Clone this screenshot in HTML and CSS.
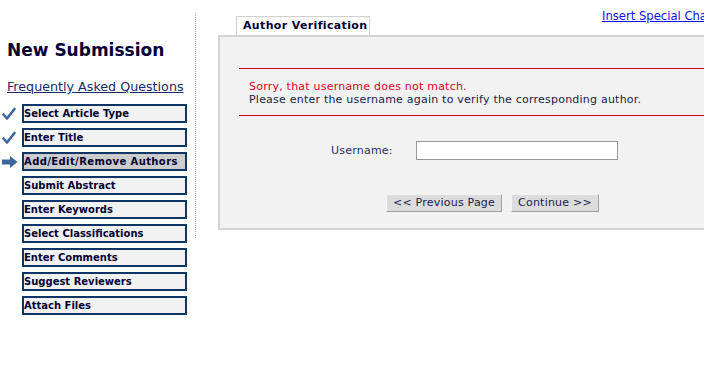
FILE: index.html
```html
<!DOCTYPE html>
<html>
<head>
<meta charset="utf-8">
<link rel="stylesheet" href="styles.css">
</head>
<body>
<div class="page">
  <aside class="sidebar">
    <h1 class="title">New Submission</h1>
    <a class="faq" href="#">Frequently Asked Questions</a>
    <ul class="steps">
      <li class="step"><span class="mark"><svg width="14" height="14" viewBox="0 0 14 14"><path d="M1.5 7.5 L5 11.5 L12.5 2" fill="none" stroke="#3a6798" stroke-width="2.6" stroke-linecap="round" stroke-linejoin="round"/></svg></span><span class="box">Select Article Type</span></li>
      <li class="step"><span class="mark"><svg width="14" height="14" viewBox="0 0 14 14"><path d="M1.5 7.5 L5 11.5 L12.5 2" fill="none" stroke="#3a6798" stroke-width="2.6" stroke-linecap="round" stroke-linejoin="round"/></svg></span><span class="box">Enter Title</span></li>
      <li class="step"><span class="mark"><svg width="16" height="12" viewBox="0 0 16 12"><path d="M0 3.5 H8 V0 L15.5 6 L8 12 V8.5 H0 Z" fill="#3a6798"/></svg></span><span class="box current">Add/Edit/Remove Authors</span></li>
      <li class="step"><span class="mark"></span><span class="box">Submit Abstract</span></li>
      <li class="step"><span class="mark"></span><span class="box">Enter Keywords</span></li>
      <li class="step"><span class="mark"></span><span class="box">Select Classifications</span></li>
      <li class="step"><span class="mark"></span><span class="box">Enter Comments</span></li>
      <li class="step"><span class="mark"></span><span class="box">Suggest Reviewers</span></li>
      <li class="step"><span class="mark"></span><span class="box">Attach Files</span></li>
    </ul>
  </aside>
  <div class="divider"></div>
  <main class="main">
    <div class="tabrow">
      <div class="tab">Author Verification</div>
      <a class="special" href="#">Insert Special Character</a>
    </div>
    <section class="panel">
      <hr class="rule">
      <div class="message">
        <div class="error">Sorry, that username does not match.</div>
        <div class="info">Please enter the username again to verify the corresponding author.</div>
      </div>
      <hr class="rule">
      <div class="field">
        <label class="label" for="u">Username:</label>
        <input class="input" id="u" type="text">
      </div>
      <div class="actions">
        <button class="btn" type="button">&lt;&lt; Previous Page</button>
        <button class="btn" type="button">Continue &gt;&gt;</button>
      </div>
    </section>
  </main>
</div>
</body>
</html>
```

FILE: styles.css
```css
html, body {
  margin: 0;
  padding: 0;
  background: #fff;
  overflow: hidden;
}
body {
  font-family: "DejaVu Sans", Verdana, sans-serif;
  font-size: 11px;
  letter-spacing: 0.22px;
  color: #1a1a4d;
}
.page {
  display: flex;
  align-items: flex-start;
  width: 704px;
}
.sidebar {
  width: 195px;
  flex: none;
  padding-top: 38px;
  letter-spacing: 0;
}
.divider {
  flex: none;
  width: 0;
  height: 225px;
  margin-top: 13px;
  border-left: 1px dotted #bdbdbd;
}
.title {
  margin: 0 0 0 7px;
  font-size: 17px;
  font-weight: bold;
  color: #000033;
  line-height: 24px;
}
.faq {
  display: block;
  margin: 17px 0 0 7px;
  font-size: 12.7px;
  line-height: 16px;
  color: #1a2a6a;
  text-decoration: underline;
}
.steps {
  list-style: none;
  margin: 9px 0 0 0;
  padding: 0;
}
.step {
  display: flex;
  align-items: center;
  height: 19px;
  margin-bottom: 5px;
}
.mark {
  width: 22px;
  flex: none;
  display: flex;
  align-items: center;
  padding-left: 2px;
  box-sizing: border-box;
}
.box {
  width: 165px;
  height: 19px;
  box-sizing: border-box;
  border: 2px solid #0e3565;
  background: #f2f2f2;
  font-weight: bold;
  font-size: 10px;
  line-height: 15px;
  padding-left: 0;
  color: #000033;
  white-space: nowrap;
}
.box.current {
  background: #cccccc;
  letter-spacing: 0.4px;
}
.main {
  flex: none;
  margin-left: 22px;
  width: 600px;
}
.tabrow {
  display: flex;
  align-items: flex-end;
  height: 35px;
}
.tab {
  margin-left: 18px;
  width: 134px;
  height: 19px;
  box-sizing: border-box;
  border: 1px solid #cfcfcf;
  border-bottom: none;
  background: #fff;
  font-weight: bold;
  font-size: 11px;
  letter-spacing: 0.35px;
  line-height: 18px;
  padding-left: 6px;
  color: #000033;
  white-space: nowrap;
}
.special {
  align-self: flex-start;
  margin-top: 9px;
  margin-left: 232px;
  font-size: 11.6px;
  letter-spacing: 0;
  line-height: 14px;
  color: #1010ee;
  white-space: nowrap;
}
.panel {
  background: #f2f2f2;
  border-left: 2px solid #d3d3d3;
  border-top: 2px solid #d3d3d3;
  border-bottom: 2px solid #d3d3d3;
  padding: 31px 0 16px 19px;
  width: 600px;
  box-sizing: border-box;
}
.rule {
  border: none;
  border-top: 1px solid #cc0000;
  margin: 0;
  height: 0;
}
.message {
  margin: 11px 0 9px 10px;
  line-height: 13px;
}
.error {
  color: #dd0022;
}
.info {
  color: #1a1a4d;
}
.field {
  display: flex;
  align-items: center;
  margin-top: 25px;
  height: 19px;
}
.label {
  margin-left: 92px;
  width: 85px;
  color: #2a2a6a;
}
.input {
  width: 202px;
  height: 19px;
  box-sizing: border-box;
  border: 1px solid #999;
  background: #fff;
  padding: 0;
  margin: 0;
}
.actions {
  display: flex;
  gap: 9px;
  margin-top: 34px;
  padding-left: 147px;
}
.btn {
  height: 18px;
  box-sizing: border-box;
  margin: 0;
  padding: 0 6px;
  background: #dcdcdc;
  border: 1px solid;
  border-color: #f4f4f4 #a0a0a0 #a0a0a0 #f4f4f4;
  font-family: "DejaVu Sans", Verdana, sans-serif;
  font-size: 11px;
  letter-spacing: 0.22px;
  line-height: 16px;
  color: #1a1a4d;
}
```
